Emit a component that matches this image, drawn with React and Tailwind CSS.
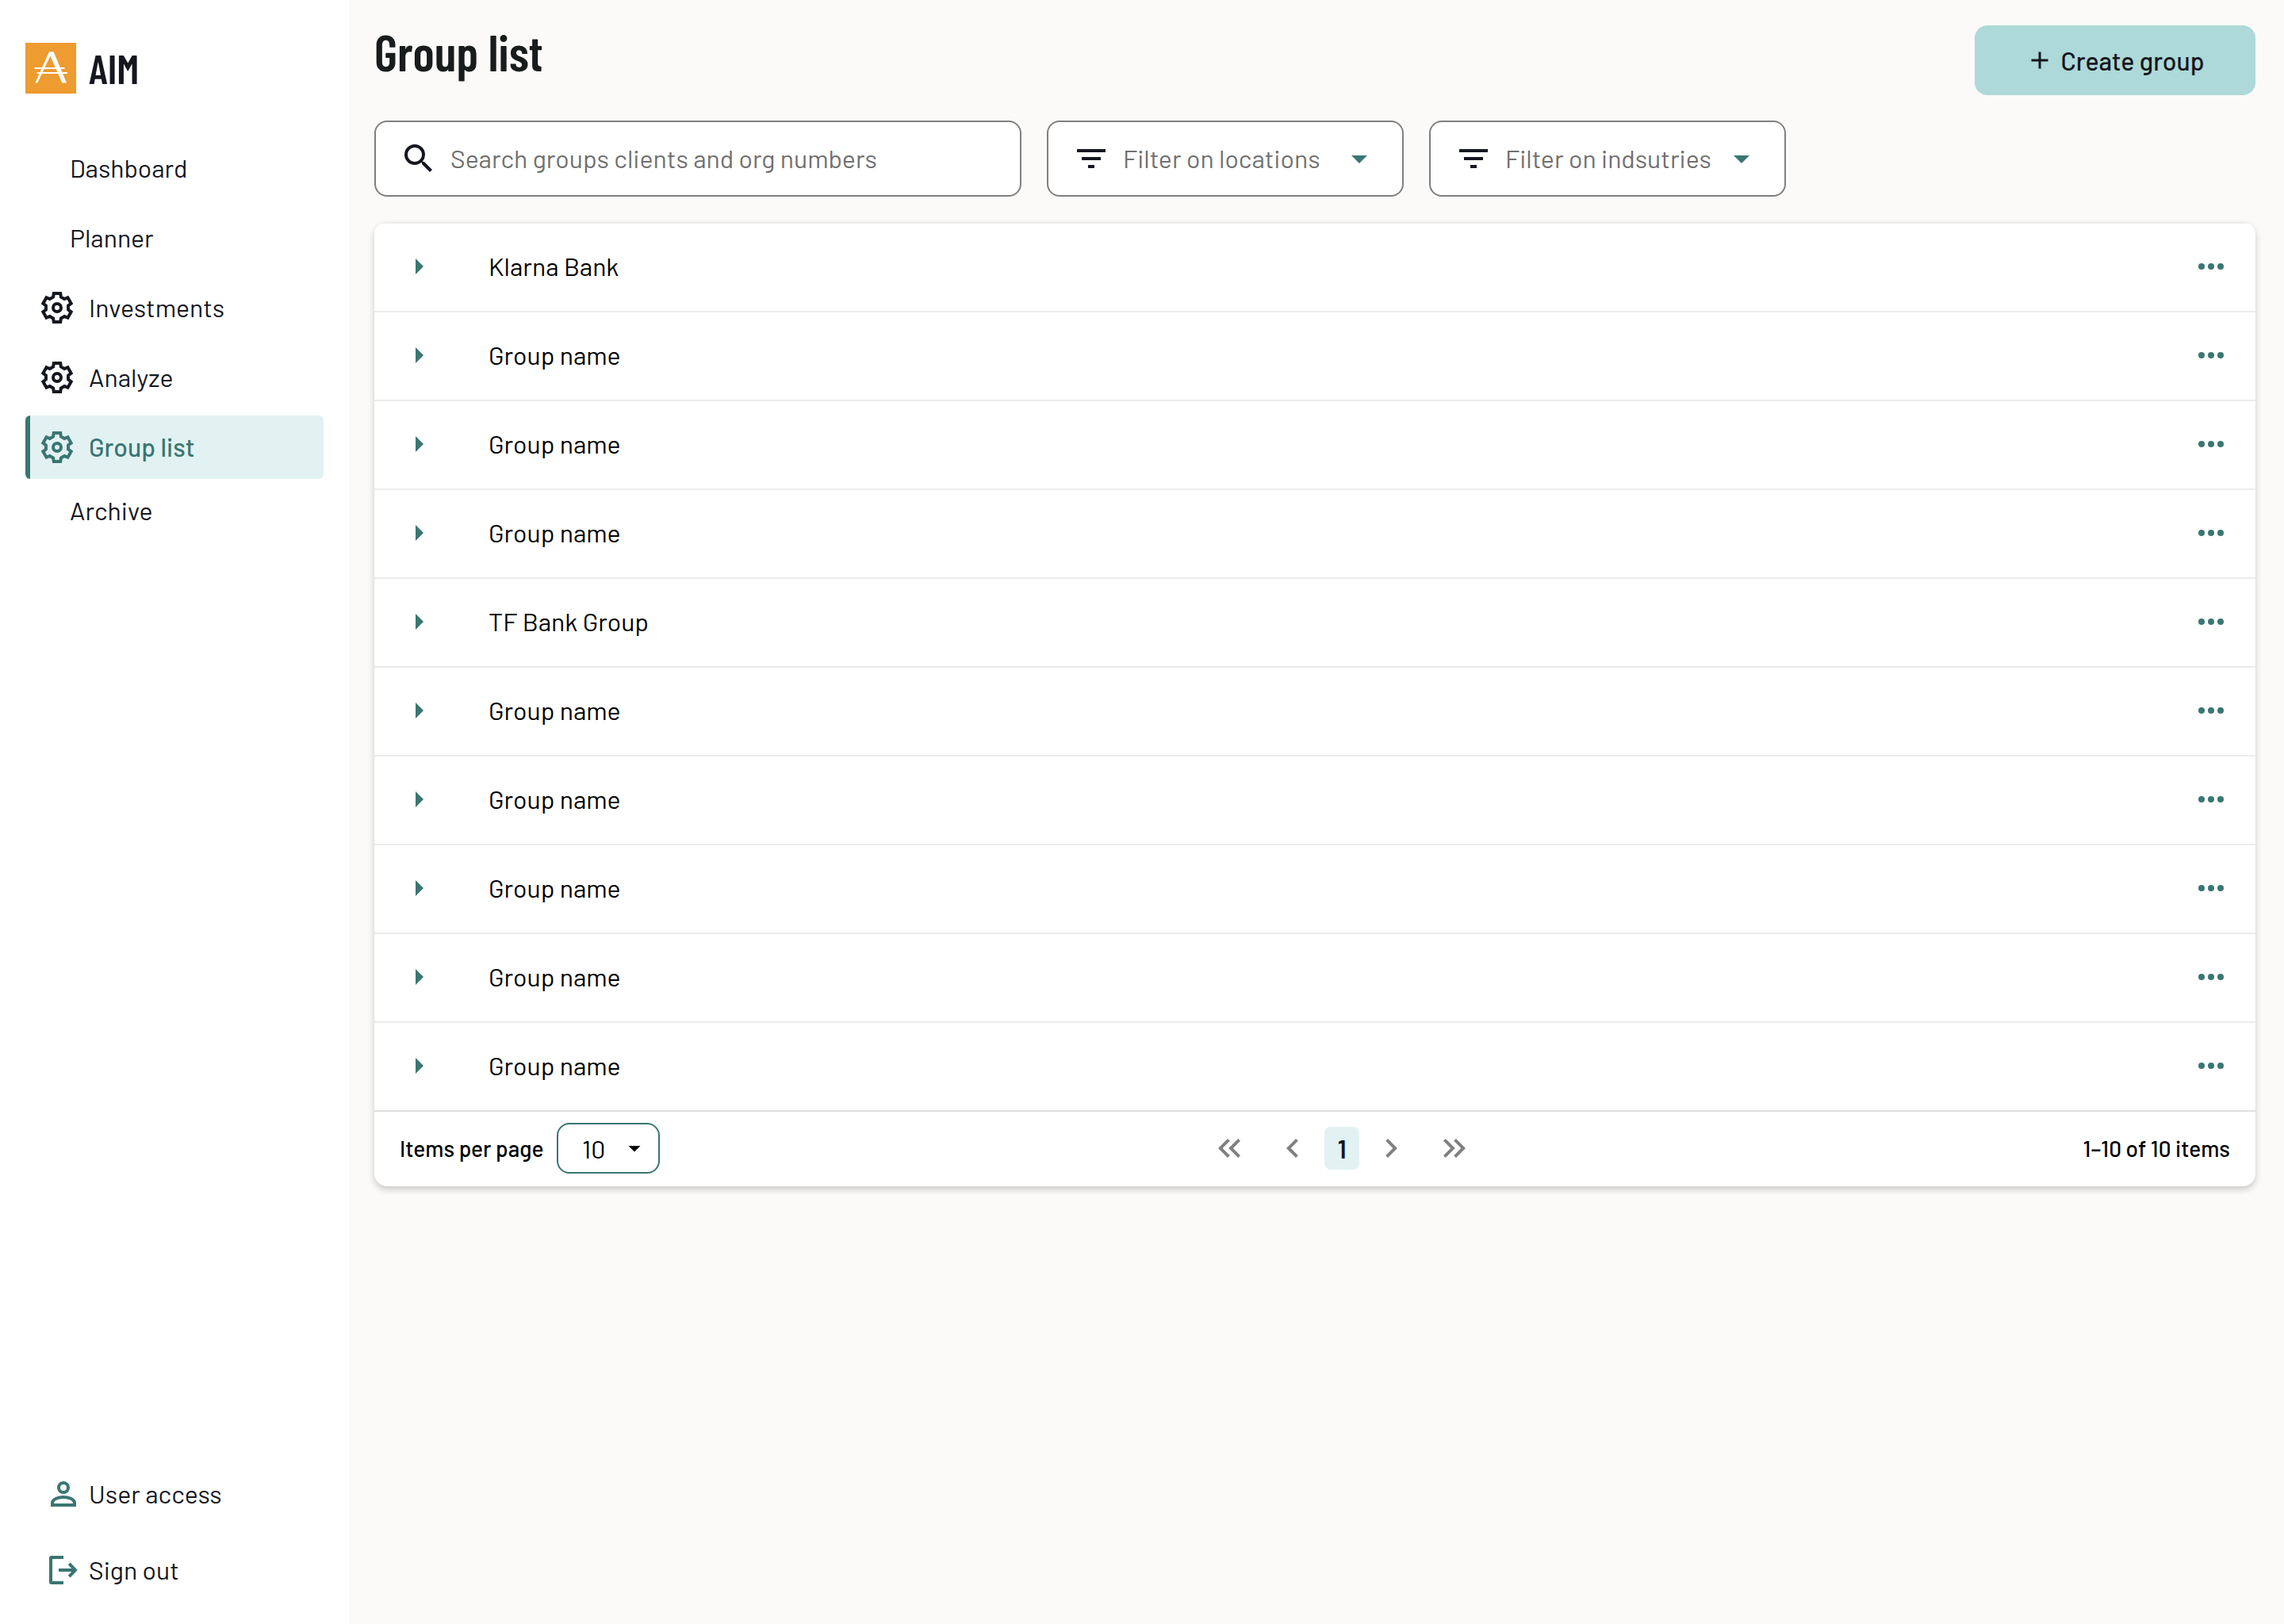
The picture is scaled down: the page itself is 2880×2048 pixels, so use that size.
import { useState } from "react";
import {
  MdAdd,
  MdArrowDropDown,
  MdArrowRight,
  MdChevronLeft,
  MdChevronRight,
  MdFilterList,
  MdKeyboardDoubleArrowLeft,
  MdKeyboardDoubleArrowRight,
  MdSearch,
} from "react-icons/md";

const navItems = [
  { label: "Dashboard" },
  { label: "Planner" },
  { label: "Investments", icon: true },
  { label: "Analyze", icon: true },
  { label: "Group list", icon: true, active: true },
  { label: "Archive" },
];

const groups = [
  { id: 1, name: "Klarna Bank" },
  { id: 2, name: "Group name" },
  { id: 3, name: "Group name" },
  { id: 4, name: "Group name" },
  { id: 5, name: "TF Bank Group" },
  { id: 6, name: "Group name" },
  { id: 7, name: "Group name" },
  { id: 8, name: "Group name" },
  { id: 9, name: "Group name" },
  { id: 10, name: "Group name" },
];

function Logo() {
  return (
    <svg viewBox="0 0 64 64" className="size-16 shrink-0" aria-hidden="true">
      <rect width="64" height="64" fill="#ee9b30" />
      <g fill="#fff">
        <path d="M30 11.3h5.6L52 50.6h-5.7L31.4 16.6 15.4 50.6h-3z" />
        <path d="M11 31h38l1 2H12z" />
        <path d="M14 37h38.500l1 2H15z" />
      </g>
    </svg>
  );
}

function GearIcon() {
  return (
    <svg viewBox="-12 -12 24 24" className="size-12 shrink-0" fill="none" stroke="currentColor" strokeWidth="2" aria-hidden="true">
      <path d="M-2.45-6.7-2.1-9H2.1L2.45-6.7 4.58-5.47 6.74-6.32 8.84-2.68 7.03-1.23V1.23L8.84 2.68 6.74 6.32 4.58 5.47 2.45 6.7 2.1 9H-2.1L-2.45 6.7-4.58 5.47-6.74 6.32-8.84 2.68-7.03 1.23V-1.23L-8.84-2.68-6.74-6.32-4.58-5.47z" />
      <circle r="2.5" />
    </svg>
  );
}

function PersonIcon() {
  return (
    <svg viewBox="0 0 24 24" className="size-12 shrink-0" fill="none" stroke="currentColor" strokeWidth="2" aria-hidden="true">
      <circle cx="12" cy="8" r="3" />
      <path d="M5 19v-1.700C5.500 15.300 8.500 14 12 14s6.500 1.300 7 3.300V19z" />
    </svg>
  );
}

function SignOutIcon() {
  return (
    <svg viewBox="0 0 24 24" className="size-12 shrink-0" fill="none" stroke="currentColor" strokeWidth="2" aria-hidden="true">
      <path d="M12 4H4.500Q4 4 4 4.500v15Q4 20 4.500 20H12" />
      <path d="M9 12h10M15.600 7.900 19.500 12l-3.900 4.100" />
    </svg>
  );
}

function DotsIcon() {
  return (
    <svg viewBox="0 0 24 24" className="size-12" fill="currentColor" aria-hidden="true">
      <circle cx="6" cy="12" r="2" />
      <circle cx="12" cy="12" r="2" />
      <circle cx="18" cy="12" r="2" />
    </svg>
  );
}

function NavLink({ item }) {
  if (item.active) {
    return (
      <a href="#" aria-current="page" className="flex h-20 items-center gap-4 rounded-md border-l-6 border-[#3a7672] bg-[#e2f2f2] pl-2.5 font-medium text-[#3a7672]">
        <GearIcon />
        <span className="pb-0.5">{item.label}</span>
      </a>
    );
  }
  return (
    <a href="#" className={`flex h-20 items-center gap-4 ${item.icon ? "pl-4" : "pl-14"}`}>
      {item.icon && <GearIcon />}
      <span className="pb-0.5">{item.label}</span>
    </a>
  );
}

function Sidebar() {
  return (
    <aside className="flex w-[440px] shrink-0 flex-col bg-white px-8 pt-[54px] pb-5">
      <div className="mb-[54px] flex items-center gap-4">
        <Logo />
        <span className="pb-0.5 font-['Barlow_Condensed',Roboto,sans-serif] text-[52px] leading-[60px] font-semibold">AIM</span>
      </div>
      <nav className="flex flex-col">
        {navItems.map((item, i) => (
          <div key={item.label} className={i > 0 && i < 5 ? "mt-2" : ""}>
            <NavLink item={item} />
          </div>
        ))}
      </nav>
      <div className="mt-auto flex flex-col">
        <a href="#" className="flex h-24 items-center gap-2 pl-6">
          <span className="text-[#3a7672]"><PersonIcon /></span>
          <span className="pb-0.5">User access</span>
        </a>
        <a href="#" className="flex h-24 items-center gap-2 pl-6">
          <span className="text-[#3a7672]"><SignOutIcon /></span>
          <span className="pb-0.5">Sign out</span>
        </a>
      </div>
    </aside>
  );
}

function FilterSelect({ label }) {
  return (
    <label className="flex h-24 w-[450px] items-center rounded-2xl border-2 border-[#808080] bg-white px-[30px]">
      <MdFilterList className="mr-4 size-12 shrink-0" />
      <select aria-label={label} className="min-w-0 flex-1 appearance-none bg-transparent pb-0.5 text-[#707070] outline-none">
        <option>{label}</option>
      </select>
      <MdArrowDropDown className="pointer-events-none size-12 shrink-0 text-[#3a7672]" />
    </label>
  );
}

function Pagination() {
  return (
    <nav aria-label="Pagination" className="flex items-center text-[#808080]">
      <button type="button" aria-label="First page" className="mr-8">
        <MdKeyboardDoubleArrowLeft className="size-12" />
      </button>
      <button type="button" aria-label="Previous page" className="mr-4">
        <MdChevronLeft className="size-12" />
      </button>
      <button type="button" aria-current="page" className="h-[54px] w-11 rounded-lg bg-[#e2f2f2] font-semibold text-[#15171f]">
        1
      </button>
      <button type="button" aria-label="Next page" className="ml-4">
        <MdChevronRight className="size-12" />
      </button>
      <button type="button" aria-label="Last page" className="ml-8">
        <MdKeyboardDoubleArrowRight className="size-12" />
      </button>
    </nav>
  );
}

function GroupTable() {
  const [perPage, setPerPage] = useState("10");

  return (
    <section className="overflow-hidden rounded-2xl bg-white text-black shadow-[0_4px_8px_rgba(0,0,0,0.2)]">
      <table className="w-full">
        <tbody>
          {groups.map((group) => (
            <tr key={group.id} className="h-28 bg-white shadow-[inset_0_2px_0_#ececec]">
              <td className="w-36 p-0 pl-8">
                <button type="button" aria-label={`Expand ${group.name}`} className="block text-[#3a7672]">
                  <MdArrowRight className="size-12" />
                </button>
              </td>
              <td className="p-0 pb-0.5">{group.name}</td>
              <td className="w-20 p-0 pr-8">
                <button type="button" aria-label={`Options for ${group.name}`} className="block text-[#3a7672]">
                  <DotsIcon />
                </button>
              </td>
            </tr>
          ))}
        </tbody>
      </table>
      <footer className="grid h-24 grid-cols-[15fr_auto_14fr] items-center px-8 text-[28px] font-medium shadow-[inset_0_2px_0_#e0e0e0]">
        <div className="flex items-center gap-4">
          <label htmlFor="per-page" className="min-w-[182px]">Items per page</label>
          <div className="flex h-16 w-[130px] items-center rounded-2xl border-2 border-[#3a7672] pr-3 pl-[30px] text-[32px] font-normal">
            <select
              id="per-page"
              value={perPage}
              onChange={(e) => setPerPage(e.target.value)}
              className="min-w-0 flex-1 appearance-none bg-transparent outline-none"
            >
              <option>10</option>
              <option>25</option>
              <option>50</option>
            </select>
            <MdArrowDropDown className="pointer-events-none size-9 shrink-0" />
          </div>
        </div>
        <div className="text-[32px]">
          <Pagination />
        </div>
        <p className="text-right">1–10 of 10 items</p>
      </footer>
    </section>
  );
}

export default function App() {
  return (
    <div className="flex min-h-screen bg-[#fbfaf8] font-[Barlow,Roboto,sans-serif] text-[32px] leading-[38px] text-[#15171f]">
      <Sidebar />
      <main className="min-w-0 flex-1 pt-8 pr-9 pl-8">
        <header className="mb-8 flex items-start justify-between">
          <h1 className="font-['Barlow_Condensed',Roboto,sans-serif] text-[63px] leading-[66px] font-semibold text-[#191c1c]">
            Group list
          </h1>
          <button type="button" className="flex h-[88px] w-[354px] items-center justify-center gap-2 rounded-2xl bg-[#add9d8] font-medium">
            <MdAdd className="size-9" />
            Create group
          </button>
        </header>
        <div className="mb-8 flex gap-8">
          <label className="flex h-24 max-w-[816px] flex-1 items-center gap-4 rounded-2xl border-2 border-[#808080] bg-white px-[30px]">
            <MdSearch className="size-12 shrink-0" />
            <input
              type="search"
              aria-label="Search groups"
              placeholder="Search groups clients and org numbers"
              className="min-w-0 flex-1 bg-transparent pb-0.5 outline-none placeholder:text-[#707070]"
            />
          </label>
          <FilterSelect label="Filter on locations" />
          <FilterSelect label="Filter on indsutries" />
        </div>
        <GroupTable />
      </main>
    </div>
  );
}
